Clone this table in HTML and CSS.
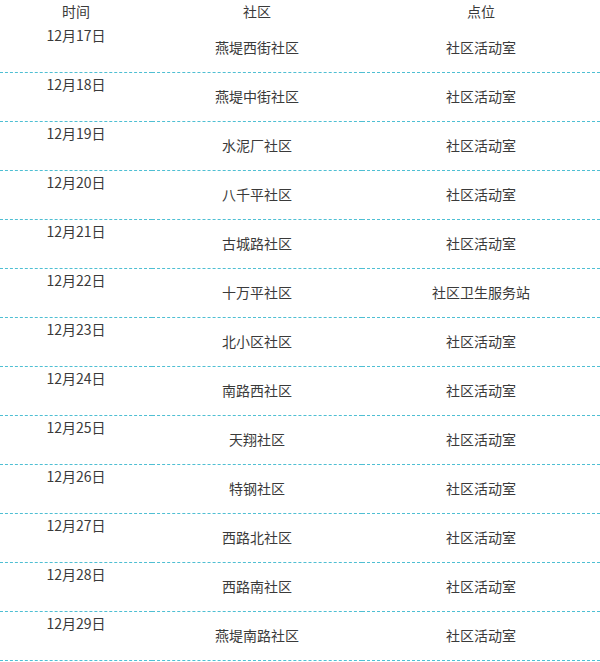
FILE: index.html
```html
<!DOCTYPE html>
<html lang="zh">
<head>
<meta charset="utf-8">
<link rel="stylesheet" href="styles.css">
</head>
<body>
<table class="sched">
  <colgroup><col class="c-date"><col class="c-comm"><col class="c-loc"></colgroup>
  <thead>
    <tr><th>时间</th><th>社区</th><th>点位</th></tr>
  </thead>
  <tbody>
    <tr><td class="date">12月17日</td><td>燕堤西街社区</td><td>社区活动室</td></tr>
    <tr><td class="date">12月18日</td><td>燕堤中街社区</td><td>社区活动室</td></tr>
    <tr><td class="date">12月19日</td><td>水泥厂社区</td><td>社区活动室</td></tr>
    <tr><td class="date">12月20日</td><td>八千平社区</td><td>社区活动室</td></tr>
    <tr><td class="date">12月21日</td><td>古城路社区</td><td>社区活动室</td></tr>
    <tr><td class="date">12月22日</td><td>十万平社区</td><td>社区卫生服务站</td></tr>
    <tr><td class="date">12月23日</td><td>北小区社区</td><td>社区活动室</td></tr>
    <tr><td class="date">12月24日</td><td>南路西社区</td><td>社区活动室</td></tr>
    <tr><td class="date">12月25日</td><td>天翔社区</td><td>社区活动室</td></tr>
    <tr><td class="date">12月26日</td><td>特钢社区</td><td>社区活动室</td></tr>
    <tr><td class="date">12月27日</td><td>西路北社区</td><td>社区活动室</td></tr>
    <tr><td class="date">12月28日</td><td>西路南社区</td><td>社区活动室</td></tr>
    <tr><td class="date">12月29日</td><td>燕堤南路社区</td><td>社区活动室</td></tr>
  </tbody>
</table>
</body>
</html>
```

FILE: styles.css
```css
html, body {
  margin: 0;
  padding: 0;
  background: #fff;
}
body {
  font-family: "Noto Sans CJK SC", "Noto Sans", sans-serif;
  font-size: 14px;
  color: #3a3a3a;
}
.sched {
  width: 600px;
  border-collapse: collapse;
  table-layout: fixed;
}
.c-date { width: 152px; }
.c-comm { width: 210px; }
.c-loc { width: 238px; }
.sched th {
  font-weight: normal;
  height: 22px;
  padding: 0 0 2px;
  line-height: 20px;
  text-align: center;
  vertical-align: middle;
}
.sched td {
  height: 46px;
  padding: 0 0 2px;
  line-height: 20px;
  text-align: center;
  vertical-align: middle;
  border-bottom: 1px dashed #4fbfd3;
  box-sizing: content-box;
}
.sched td.date {
  vertical-align: top;
  padding: 1px 0 0;
  height: 47px;
}
```
